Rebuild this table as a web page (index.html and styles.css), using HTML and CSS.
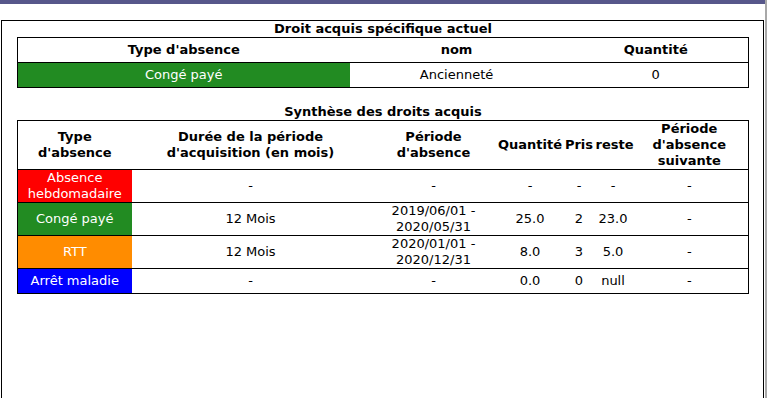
FILE: index.html
```html
<!DOCTYPE html>
<html>
<head>
<meta charset="utf-8">
<link rel="stylesheet" href="styles.css">
</head>
<body>
<div class="page">
  <div class="topbar"></div>
  <div class="frame">
    <table class="grid t1">
      <caption>Droit acquis spécifique actuel</caption>
      <colgroup><col class="c1a"><col class="c1b"><col class="c1c"></colgroup>
      <thead>
        <tr><th>Type d'absence</th><th>nom</th><th>Quantité</th></tr>
      </thead>
      <tbody>
        <tr><td class="green">Congé payé</td><td>Ancienneté</td><td>0</td></tr>
      </tbody>
    </table>
    <table class="grid t2">
      <caption>Synthèse des droits acquis</caption>
      <colgroup><col class="c2a"><col class="c2b"><col class="c2c"><col class="c2d"><col class="c2e"><col class="c2f"><col class="c2g"></colgroup>
      <thead>
        <tr>
          <th>Type<br>d'absence</th>
          <th>Durée de la période<br>d'acquisition (en mois)</th>
          <th>Période<br>d'absence</th>
          <th>Quantité</th>
          <th>Pris</th>
          <th>reste</th>
          <th>Période<br>d'absence<br>suivante</th>
        </tr>
      </thead>
      <tbody>
        <tr><td class="red">Absence<br>hebdomadaire</td><td>-</td><td>-</td><td>-</td><td>-</td><td>-</td><td>-</td></tr>
        <tr><td class="green">Congé payé</td><td>12 Mois</td><td>2019/06/01 -<br>2020/05/31</td><td>25.0</td><td>2</td><td>23.0</td><td>-</td></tr>
        <tr><td class="orange">RTT</td><td>12 Mois</td><td>2020/01/01 -<br>2020/12/31</td><td>8.0</td><td>3</td><td>5.0</td><td>-</td></tr>
        <tr><td class="blue">Arrêt maladie</td><td>-</td><td>-</td><td>0.0</td><td>0</td><td>null</td><td>-</td></tr>
      </tbody>
    </table>
  </div>
</div>
</body>
</html>
```
FILE: styles.css
```css
html, body {
  margin: 0;
  padding: 0;
  background: #fff;
}
body {
  font-family: "DejaVu Sans", Verdana, sans-serif;
  font-size: 13px;
  line-height: 16px;
  color: #000;
  overflow: hidden;
}
.page {
  width: 765px;
  height: 398px;
  border-right: 2px solid #a8a8a8;
}
.topbar {
  height: 4px;
  background: #57578a;
}
.frame {
  margin: 16px 0 0 1px;
  width: 763px;
  height: 378px;
  border: 1px solid #000;
  border-bottom: none;
  padding: 0 15px;
  box-sizing: border-box;
}
.grid {
  border-collapse: collapse;
  table-layout: fixed;
  width: 731px;
  border: 1px solid #000;
}
.grid caption {
  font-weight: bold;
  height: 16px;
  line-height: 16px;
}
.grid th, .grid td {
  padding: 0;
  height: 24px;
  text-align: center;
  vertical-align: middle;
  border-top: 1px solid #000;
}
.grid th {
  font-weight: bold;
}
.t2 {
  margin-top: 16px;
}
.c1a { width: 332px; }
.c1b { width: 214px; }
.c1c { width: 185px; }
.c2a { width: 114px; }
.c2b { width: 238px; }
.c2c { width: 128px; }
.c2d { width: 65px; }
.c2e { width: 33px; }
.c2f { width: 35px; }
.c2g { width: 118px; }
.green { background: #228b22; color: #fff; }
.red { background: #ff0000; color: #fff; }
.orange { background: #ff8c00; color: #fff; }
.blue { background: #0000ff; color: #fff; }
```
